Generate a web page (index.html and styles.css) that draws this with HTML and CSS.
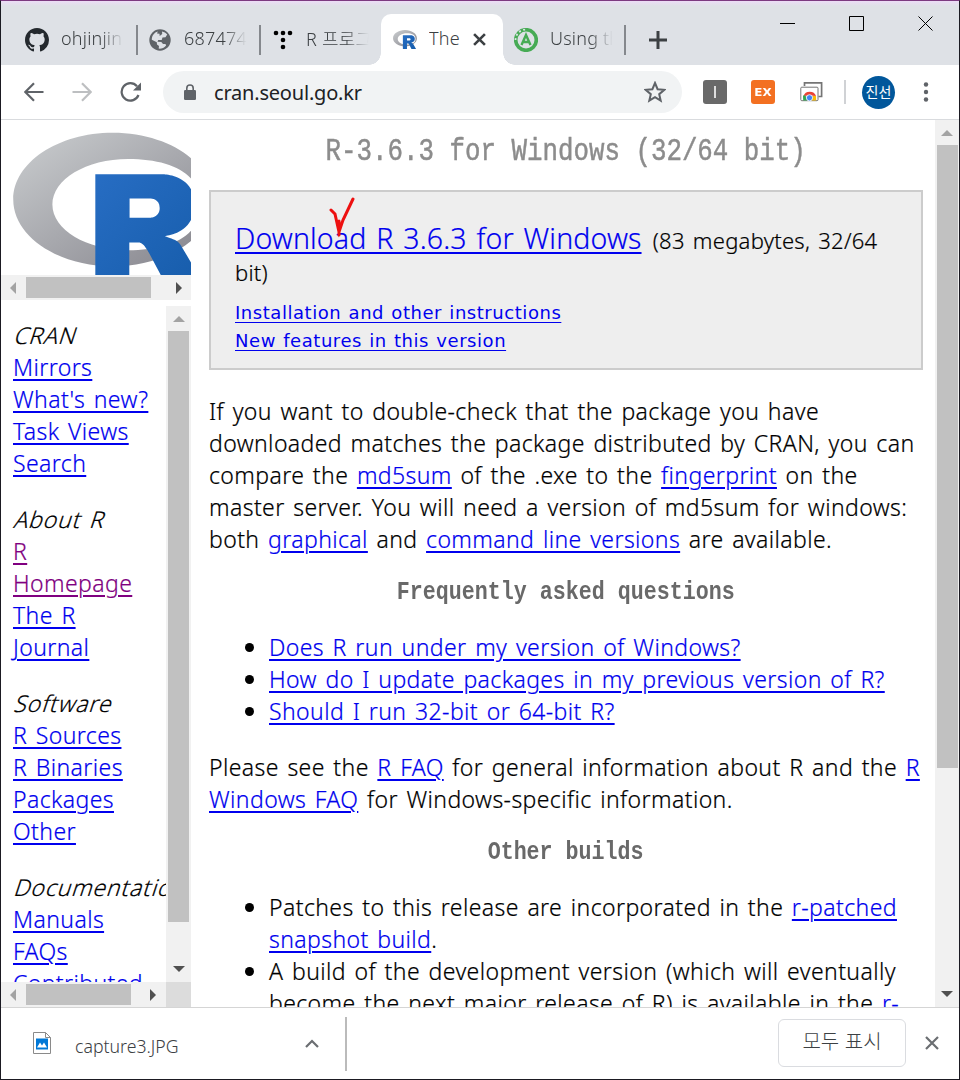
FILE: index.html
```html
<!DOCTYPE html>
<html lang="ko">
<head>
<meta charset="utf-8">
<title>The Comprehensive R Archive Network</title>
<link rel="stylesheet" href="styles.css">
</head>
<body>
<svg class="defs" width="0" height="0">
  <defs>
    <linearGradient id="ring" x1="0" y1="0" x2="1" y2="1"><stop offset="0" stop-color="#cbced0"/><stop offset="1" stop-color="#84838b"/></linearGradient>
    <linearGradient id="letter" x1="0" y1="0" x2="1" y2="1"><stop offset="0" stop-color="#276dc3"/><stop offset="1" stop-color="#165caa"/></linearGradient>
    <symbol id="rlogo" viewBox="0 0 724 561" preserveAspectRatio="none">
      <path fill="url(#ring)" fill-rule="evenodd" d="M361.5 486C162.300 486 .9 377.800.9 244.500S162.300 3 361.500 3 722 111.100 722 244.500 560.600 486 361.500 486ZM416.600 97.400C265.300 97.400 142.600 171.300 142.600 262.500S265.300 427.600 416.600 427.600 679.700 377 679.700 262.500 568 97.400 416.600 97.400Z"/>
      <path fill="url(#letter)" fill-rule="evenodd" d="M550 377s21.800 6.600 34.500 13c4.400 2.200 12 6.700 17.500 12.500 5.400 5.700 8 11.500 8 11.500l86 145H557l-65-122s-13.300-22.900-21.500-29.500c-6.800-5.500-9.700-7.500-16.500-7.500h-33v159H298V153h247s112.500 2 112.500 109S550 377 550 377ZM496.500 241H422v69h74.500s34.500-.1 34.500-35.100-34.500-33.900-34.500-33.900Z"/>
    </symbol>
  </defs>
</svg>
<div class="window">
  <header class="tabstrip">
    <div class="tab tab-1"><svg class="fav" viewBox="0 0 16 16"><path fill="#24292e" d="M8 0C3.580 0 0 3.580 0 8c0 3.540 2.290 6.530 5.470 7.590.4.070.55-.17.550-.38 0-.19-.01-.82-.01-1.490-2.010.37-2.530-.49-2.690-.94-.09-.23-.48-.94-.82-1.130-.28-.15-.68-.52-.01-.53.630-.01 1.080.58 1.230.82.720 1.210 1.870.87 2.330.66.070-.52.280-.87.510-1.070-1.780-.2-3.640-.89-3.640-3.950 0-.87.310-1.590.82-2.150-.08-.2-.36-1.020.08-2.120 0 0 .67-.21 2.200.82a7.400 7.400 0 0 1 4 0c1.530-1.040 2.200-.82 2.200-.82.440 1.100.16 1.920.08 2.120.51.560.82 1.270.82 2.150 0 3.070-1.870 3.750-3.650 3.950.29.250.54.730.54 1.480 0 1.070-.01 1.930-.01 2.200 0 .21.150.46.550.38A8 8 0 0 0 16 8c0-4.420-3.580-8-8-8z"/></svg><span class="tab-title fade">ohjinjin.</span></div>
    <div class="tab tab-2"><svg class="fav" viewBox="0 0 22 22"><circle cx="11" cy="11" r="10.700" fill="#5f6368"/><path fill="#dee1e6" d="M13 2.400c2 .4 4 1.500 5.200 3.200l-1.700 2.600-3 .3-.8 2.500H9.200l-.7 1.800 3.800.2 1.700 2h2.500l.6 1.500c-2 2.500-4.600 3.300-7.400 3.100l.3-2.600-2-1.400-.2-2.300-5-2.500c0-4.500 2.500-7.400 6-8.400L8 4.500l2.500.2L10.700 7l2.500-2z"/></svg><span class="tab-title fade">6874747</span></div>
    <div class="tab tab-3"><svg class="fav dots" viewBox="0 0 20 20"><g><circle cx="3" cy="3" r="2.300"/><circle cx="10" cy="3" r="2.300"/><circle cx="17" cy="3" r="2.300"/><circle cx="10" cy="10" r="2.300"/><circle cx="10" cy="17" r="2.300"/></g></svg><span class="tab-title fade">R 프로그</span></div>
    <div class="tab tab-active"><svg class="fav-r"><use href="#rlogo"/></svg><span class="tab-title">The</span><svg class="tab-x" viewBox="0 0 12 12"><path d="m1 1 10 10M11 1 1 11"/></svg></div>
    <div class="tab tab-5"><svg class="fav fav-green" viewBox="0 0 24 24"><circle cx="12" cy="12" r="10.300" fill="none" stroke="#47ab55" stroke-width="3.600"/><path d="M1.500 12A10.500 10.500 0 0 1 12 1.500" fill="none" stroke="#dee1e6" stroke-width="1.800" stroke-dasharray="2 2.500"/><path d="m7.500 17 4.500-10 4.500 10M9 14h6" fill="none" stroke="#47ab55" stroke-width="2.400"/></svg><span class="tab-title fade">Using th</span></div>
    <svg class="plus" viewBox="0 0 18 18"><path d="M9 0v18M0 9h18"/></svg>
    <div class="caption">
      <svg viewBox="0 0 16 16"><path d="M0 7.500h15"/></svg>
      <svg viewBox="0 0 16 16"><path d="M.5.5h14v14H.5z"/></svg>
      <svg viewBox="0 0 16 16"><path d="m.5.5 14 14m0-14-14 14"/></svg>
    </div>
  </header>
  <div class="toolbar">
    <svg class="nav back" viewBox="0 0 20 20"><path d="M19.500 10H1.500M10 1.200 1.300 10l8.700 8.800"/></svg>
    <svg class="nav fwd" viewBox="0 0 20 20"><path d="M.5 10h18M10 1.200 18.700 10 10 18.800"/></svg>
    <svg class="nav reload" viewBox="0 0 22 20"><path d="M18.500 13A8.700 8.700 0 1 1 17 4.300"/><path class="solid" d="M21 .5V8.500h-8z"/></svg>
    <div class="omnibox">
      <svg class="lock" viewBox="0 0 12 16"><path d="M2.800 7V4.200a3.200 3.200 0 0 1 6.400 0V7" fill="none" stroke="#5f6368" stroke-width="1.600"/><rect y="6" width="12" height="10" rx="1.200" fill="#5f6368"/></svg>
      <span class="url">cran.seoul.go.kr</span>
      <svg class="star" viewBox="0 0 22 22"><path d="m11 2 2.600 6.200 6.700.6-5.100 4.400 1.500 6.500L11 16.200l-5.700 3.500 1.500-6.500-5.100-4.400 6.700-.6z"/></svg>
    </div>
    <div class="ext ext-grey"><i></i></div>
    <div class="ext ext-ex"><span>EX</span></div>
    <svg class="ext-media" viewBox="0 0 23 20"><path d="M4.500 4V.8H21.600V14.500H18.500" fill="none" stroke="#757575" stroke-width="1.700"/><rect x=".8" y="5.200" width="17.200" height="13.500" rx="1" fill="#fff" stroke="#757575" stroke-width="1"/><path d="M3.500 14a6.500 6 0 0 1 12.500 0l-6.500-.5z" fill="#ea4335"/><path d="M3 13.500l2.500 0 2 5H3.200z" fill="#34a853"/><path d="M11 14h5l.2 4.500h-5z" fill="#fbbc05"/><circle cx="9.500" cy="15.800" r="3.100" fill="#4285f4" stroke="#fff" stroke-width=".8"/></svg>
    <i class="vsep"></i>
    <span class="avatar">진선</span>
    <svg class="kebab" viewBox="0 0 6 20"><circle cx="3" cy="2.500" r="2.200"/><circle cx="3" cy="10" r="2.200"/><circle cx="3" cy="17.500" r="2.200"/></svg>
  </div>
  <div class="content">
    <aside class="side">
      <div class="logo-frame"><svg class="logo"><use href="#rlogo"/></svg></div>
      <div class="hbar hbar-top"><i class="arrow left off"></i><i class="thumb"></i><i class="arrow right"></i></div>
      <div class="menu-frame">
        <nav class="menu">
          <div><em>CRAN</em><a>Mirrors</a><a>What's new?</a><a>Task Views</a><a>Search</a></div>
          <div><em>About R</em><a class="seen">R<br>Homepage</a><a>The R<br>Journal</a></div>
          <div><em>Software</em><a>R Sources</a><a>R Binaries</a><a>Packages</a><a>Other</a></div>
          <div><em>Documentation</em><a>Manuals</a><a>FAQs</a><a>Contributed</a></div>
        </nav>
        <div class="vbar vbar-menu"><i class="arrow up off"></i><i class="thumb"></i><i class="arrow down"></i></div>
      </div>
      <div class="menu-foot"><div class="hbar hbar-menu"><i class="arrow left off"></i><i class="thumb"></i><i class="arrow right"></i></div></div>
    </aside>
    <main class="page">
      <h1><span>R-3.6.3 for Windows (32/64 bit)</span></h1>
      <section class="download">
        <p class="dl"><a class="big">Download R 3.6.3 for Windows</a> (83 megabytes, 32/64<br>bit)</p>
        <p class="small"><a>Installation and other instructions</a><br><a>New features in this version</a></p>
        <svg class="mark" viewBox="0 0 26 42"><path d="m2 13 4 4 4 18 4-12L24 2M10 24v14"/></svg>
      </section>
      <p class="intro">If you want to double-check that the package you have<br>downloaded matches the package distributed by CRAN, you can<br>compare the <a>md5sum</a> of the .exe to the <a>fingerprint</a> on the<br>master server. You will need a version of md5sum for windows:<br>both <a>graphical</a> and <a>command line versions</a> are available.</p>
      <h3><span>Frequently asked questions</span></h3>
      <ul>
        <li><a>Does R run under my version of Windows?</a></li>
        <li><a>How do I update packages in my previous version of R?</a></li>
        <li><a>Should I run 32-bit or 64-bit R?</a></li>
      </ul>
      <p class="faq">Please see the <a>R FAQ</a> for general information about R and the <a>R<br>Windows FAQ</a> for Windows-specific information.</p>
      <h3><span>Other builds</span></h3>
      <ul>
        <li>Patches to this release are incorporated in the <a>r-patched<br>snapshot build</a>.</li>
        <li>A build of the development version (which will eventually<br>become the next major release of R) is available in the <a>r-</a></li>
      </ul>
    </main>
    <div class="vbar vbar-page"><i class="arrow up off"></i><i class="thumb"></i><i class="arrow down"></i></div>
  </div>
  <footer class="shelf">
    <svg class="file" viewBox="0 0 18 22"><path d="M.5.5h12l5 5v16H.5z" fill="#fff" stroke="#8a8a8a"/><path d="M12.500.5v5h5" fill="none" stroke="#8a8a8a"/><path d="M3 6.500h12v11H3z" fill="#0078d7"/><path d="m4 15.500 3-5 2 3 2-3 3 5z" fill="#fff"/></svg>
    <span class="fname">capture3.JPG</span>
    <svg class="chev" viewBox="0 0 14 9"><path d="m1 8 6-6 6 6"/></svg>
    <i class="shelf-sep"></i>
    <button class="all">모두 표시</button>
    <svg class="shelf-x" viewBox="0 0 14 14"><path d="m1 1 12 12M13 1 1 13"/></svg>
  </footer>
</div>
</body>
</html>
```
FILE: styles.css
```css
* { box-sizing: border-box; }
body { margin: 0; background: #fff; color: #000; font-family: "Noto Sans", "Noto Sans CJK KR", sans-serif; }
p, h1, h3, ul { margin: 0; padding: 0; font-weight: inherit; }
svg { display: block; flex: none; }
.defs { position: absolute; }
.window { width: 960px; height: 1080px; border: 1px solid #1b1a22; border-top-color: #7c3a80; display: flex; flex-direction: column; overflow: hidden; }

/* tab strip */
.tabstrip { height: 64px; flex: none; display: flex; align-items: flex-start; padding-top: 13px; background: linear-gradient(#ecdcf6, #dee1e6 5px); }
.tab { height: 51px; display: flex; align-items: center; flex: none; position: relative; font-size: 18px; color: #3c4043; }
.tab-1::after, .tab-2::after, .tab-5::after { content: ""; position: absolute; right: -1px; top: 11px; width: 2px; height: 30px; background: #85888d; }
.tab-1 { width: 136px; padding-left: 24px; }
.tab-2 { width: 123px; padding-left: 12px; }
.tab-3 { width: 121px; padding-left: 13px; }
.tab-active { width: 122px; padding-left: 12px; background: #fff; border-radius: 10px 10px 0 0; }
.tab-active::before, .tab-active::after { content: ""; position: absolute; bottom: 0; width: 12px; height: 12px; }
.tab-active::before { left: -12px; background: radial-gradient(circle at 0 0, transparent 11.500px, #fff 12px); }
.tab-active::after { right: -12px; background: radial-gradient(circle at 12px 0, transparent 11.500px, #fff 12px); }
.tab-5 { width: 122px; padding-left: 11px; }
.fav { width: 24px; height: 24px; margin-right: 12px; }
.tab-2 .fav { width: 22px; height: 22px; margin-right: 13px; }
.fav.dots { width: 20px; height: 20px; margin-right: 13px; }
.fav-r { width: 24px; height: 19px; margin-right: 12px; }
.tab-title { white-space: nowrap; overflow: hidden; width: 64px; padding-bottom: 3px; font-weight: 300; letter-spacing: .2px; }
.fade { mask-image: linear-gradient(90deg, #000 62%, transparent 98%); }
.tab-active .tab-title { width: 44px; }
.tab-x { width: 13px; height: 13px; }
.tab-x path { stroke: #3c4043; stroke-width: 2.400; }
.plus { width: 18px; height: 18px; margin: 17px 0 0 24px; }
.plus path { stroke: #3c4043; stroke-width: 3; }
.caption { display: flex; gap: 53px; margin: 2px 0 0 113px; }
.caption svg { width: 16px; height: 16px; }
.caption path { fill: none; stroke: #000; }

/* toolbar */
.toolbar { height: 55px; flex: none; display: flex; align-items: center; padding-left: 23px; border-bottom: 1px solid #d9dbde; background: #fff; }
.nav { width: 20px; height: 20px; fill: none; stroke: #5f6368; stroke-width: 2.200; }
.fwd { margin-left: 28px; stroke: #bdbfc1; }
.reload { width: 22px; margin-left: 28px; }
.solid { fill: #5f6368; stroke: none; }
.omnibox { width: 519px; height: 42px; margin-left: 21px; padding: 0 16px 0 21px; border-radius: 21px; background: #f1f3f4; display: flex; align-items: center; }
.lock { width: 12px; height: 16px; }
.url { margin-left: 18px; flex: 1; font-size: 20px; letter-spacing: -.2px; color: #202124; }
.star { width: 22px; height: 22px; }
.star path { fill: none; stroke: #5f6368; stroke-width: 2; }
.ext { width: 24px; height: 24px; border-radius: 3px; display: flex; align-items: center; justify-content: center; }
.ext-grey { margin-left: 21px; background: #696969; }
.ext-grey i { width: 2px; height: 12px; background: #ddd; }
.ext-ex { margin-left: 24px; background: #f37021; color: #fff; font: 700 11px "DejaVu Sans", sans-serif; }
.ext-ex span { transform: scaleX(1.080); }
.ext-media { width: 23px; height: 20px; margin-left: 25px; }
.vsep { width: 2px; height: 24px; margin-left: 21px; background: #d0d2d5; }
.avatar { width: 33px; height: 33px; margin-left: 16px; border-radius: 50%; background: #01579b; color: #fff; font: 14px/31px "Noto Sans CJK KR", sans-serif; text-align: center; }
.kebab { width: 6px; height: 20px; margin-left: 28px; fill: #5f6368; }

/* frames */
.content { height: 887px; flex: none; display: flex; font-weight: 300; letter-spacing: .400px; word-spacing: 2.200px; -webkit-text-stroke: .2px; }
.side { width: 190px; flex: none; }
.logo-frame { height: 155px; padding: 12px 0 0 12px; overflow: hidden; }
.logo { width: 200px; height: 155px; }
.thumb { background: #c1c1c1; display: block; flex: none; }
.hbar { display: flex; align-items: center; height: 25px; background: #f1f1f1; }
.vbar { display: flex; flex-direction: column; align-items: center; width: 25px; background: #f1f1f1; flex: none; }
.hbar .thumb { height: 21px; }
.vbar .thumb { width: 21px; }
.arrow { width: 0; height: 0; border: 0 solid transparent; flex: none; }
.left { border-width: 6px 6px 6px 0; border-right-color: #505050; margin: 0 10px 0 9px; }
.right { border-width: 6px 0 6px 6px; border-left-color: #505050; }
.up { border-width: 0 6px 6px; border-bottom-color: #505050; margin: 10px 0 9px; }
.down { border-width: 6px 6px 0; border-top-color: #505050; margin: auto 0 10px; }
.off.left { border-right-color: #a3a3a3; }
.off.up { border-bottom-color: #a3a3a3; }
.hbar-top .thumb { width: 125px; }
.hbar-top .right { margin-left: 25px; }
.menu-frame { height: 676px; margin-top: 6px; display: flex; }
.menu { width: 165px; padding: 13px 0 0 12px; overflow: hidden; font-size: 23px; line-height: 32px; }
.menu div { margin-bottom: 24px; }
.menu em, .menu a { display: block; width: max-content; }
.menu em { font-style: normal; letter-spacing: .8px; transform: skewX(-18deg); transform-origin: 0 75%; }
.vbar-menu .thumb { height: 591px; }
.menu-foot { background: #dcdcdc; height: 25px; }
.hbar-menu { width: 165px; }
.hbar-menu .thumb { width: 105px; }
.hbar-menu .right { margin-left: 19px; }
.vbar-page { width: 24px; margin-left: -1px; }
.vbar-page .thumb { height: 623px; }
a { color: #00e; text-decoration: underline; text-decoration-thickness: 2px; text-underline-offset: 3px; }
.seen { color: #800080; }

/* article */
.page { width: 745px; flex: none; padding: 13px 13px 0 18px; overflow: hidden; font-size: 23px; line-height: 32px; white-space: nowrap; }
h1, h3 { display: flex; justify-content: center; font-family: "Liberation Mono", monospace; letter-spacing: 0; word-spacing: 0; }
h1 { height: 36px; margin-bottom: 21px; font-size: 32px; line-height: 37px; color: #8c8c8c; -webkit-text-stroke: .5px #8c8c8c; }
h1 span { transform: scaleX(.807); }
h3 { height: 32px; margin: 21px 0 23px; font-size: 26px; font-weight: 700; color: #696969; -webkit-text-stroke: 0; }
h3 span { transform: scaleX(.833); }
.download { position: relative; height: 180px; padding: 30px 24px 0; border: 2px solid #ccc; background: #eee; margin-bottom: 25px; }
.dl { line-height: 32px; font-size: 22px; letter-spacing: .250px; }
.big { margin-right: 3px; font-size: 28.500px; line-height: 32px; letter-spacing: .150px; }
.small { margin-top: 11px; font: 18px/28px "DejaVu Sans", sans-serif; letter-spacing: .550px; word-spacing: 1px; -webkit-text-stroke: 0; }
.small a { text-decoration-thickness: 1px; }
.mark { position: absolute; left: 118px; top: 5px; width: 26px; height: 42px; }
.mark path { fill: none; stroke: #ed1010; stroke-width: 3; stroke-linecap: round; }
ul { list-style: none; margin-bottom: 24px; }
li { padding-left: 60px; position: relative; }
li::before { content: ""; position: absolute; left: 36px; top: 12px; width: 9px; height: 9px; border-radius: 50%; background: #000; }

/* download shelf */
.shelf { flex: none; height: 72px; display: flex; align-items: center; border-top: 1px solid #d5d5d5; background: #fff; }
.file { width: 18px; height: 22px; margin: 0 0 2px 32px; }
.fname { width: 230px; margin: 5px 0 0 24px; font-size: 17.700px; font-weight: 300; color: #3c4043; }
.chev { width: 14px; height: 9px; }
.chev path, .shelf-x path { fill: none; stroke: #6b6e72; stroke-width: 2.200; }
.shelf-sep { width: 2px; height: 54px; margin-left: 26px; background: #bbb; }
.all { width: 128px; height: 48px; margin: 0 0 2px 431px; padding: 0 0 4px; border: 1px solid #dadce0; border-radius: 6px; background: #fff; color: #3c4043; font: 300 20px "Noto Sans CJK KR", sans-serif; }
.shelf-x { width: 14px; height: 14px; margin: 0 0 2px 19px; }
```
